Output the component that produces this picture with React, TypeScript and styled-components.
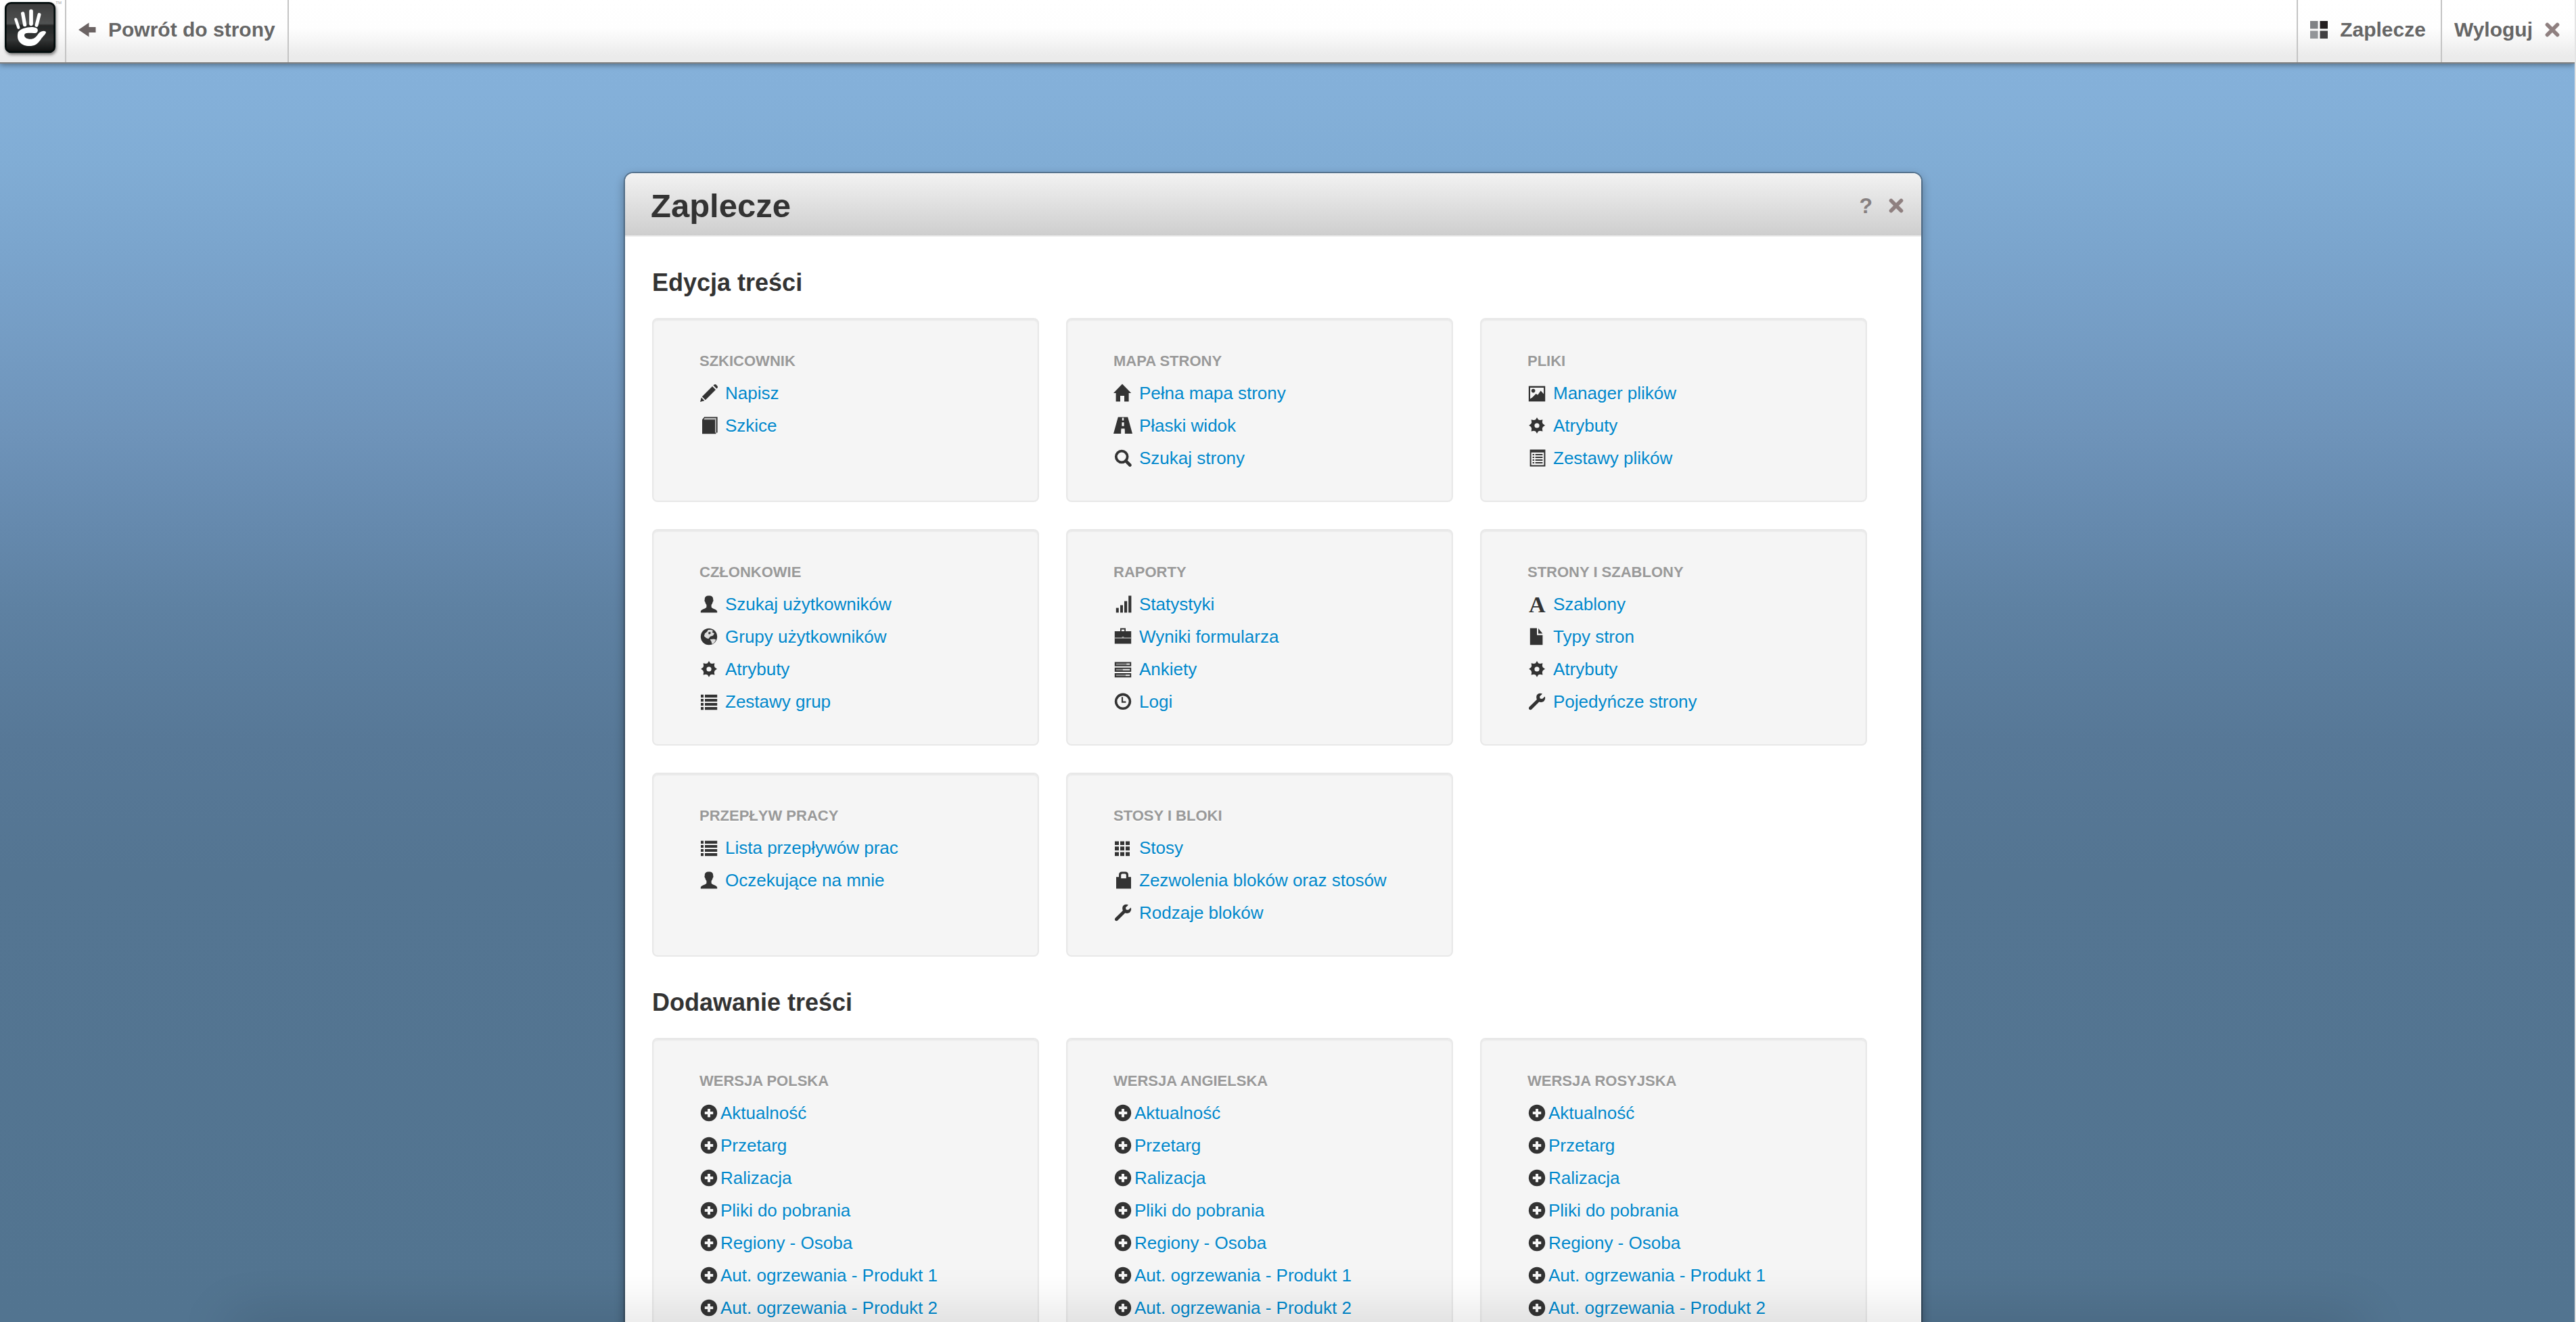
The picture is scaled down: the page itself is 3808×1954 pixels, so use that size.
import React from "react";
import styled, { createGlobalStyle } from "styled-components";

const GlobalStyle = createGlobalStyle`
  *, *::before, *::after { box-sizing: border-box; }
  body {
    margin: 0;
    font-family: "Helvetica Neue", "Liberation Sans", Arial, sans-serif;
    color: #333;
  }
  h1, h2, h3, ul { margin: 0; padding: 0; }
  ul { list-style: none; }
  a { text-decoration: none; }
  button { border: 0; padding: 0; background: none; font: inherit; cursor: pointer; }
`;

const Page = styled.div`
  height: 100vh;
  overflow-x: hidden;
  overflow-y: auto;
  scrollbar-width: none;
  border-right: 2px solid #e4e4e4;
  background: linear-gradient(
    to bottom,
    #86b2db 0,
    #84b0d9 7%,
    #81add5 12%,
    #78a1c9 22%,
    #6e93b9 33%,
    #6589ad 40%,
    #5e81a2 46%,
    #577897 56%,
    #547592 66%,
    #527490 100%
  );
`;

const Toolbar = styled.header`
  position: relative;
  display: flex;
  height: 94px;
  border-bottom: 2px solid #808080;
  background: linear-gradient(to bottom, #fff 0%, #fefefe 45%, #ebebeb 90%, #ebebeb 100%);
  box-shadow: 0 2px 8px rgba(0, 0, 0, 0.4);
`;

const LogoLink = styled.a`
  display: block;
  width: 98px;
  height: 92px;
  border-right: 2px solid #c4c4c4;
`;

const ToolbarItem = styled.a<{ $side: "left" | "right" }>`
  display: flex;
  align-items: center;
  gap: 18px;
  padding: 0 ${(p) => (p.$side === "left" ? "18px" : "22px")} 4px 18px;
  font-size: 30px;
  font-weight: bold;
  line-height: 36px;
  color: #666;
  border: 0 solid #c4c4c4;
  border-right-width: ${(p) => (p.$side === "left" ? "2px" : "0")};
  border-left-width: ${(p) => (p.$side === "right" ? "2px" : "0")};
`;

const ToolbarSpacer = styled.div`
  flex: 1;
`;

const Main = styled.main`
  display: flex;
  justify-content: center;
  padding: 160px 42px 80px 0;
`;

const Pane = styled.section`
  flex: 1;
  max-width: 1920px;
  border: 2px solid rgba(0, 0, 0, 0.3);
  border-radius: 14px;
  background: #fff;
  background-clip: padding-box;
  box-shadow: 0 6px 14px rgba(0, 0, 0, 0.3);
`;

const PaneHeader = styled.div`
  display: flex;
  align-items: center;
  height: 94px;
  padding: 4px 26px 0 38px;
  border-bottom: 2px solid #eee;
  border-radius: 12px 12px 0 0;
  background: linear-gradient(to bottom, #f2f2f2, #cecece);
`;

const PaneTitle = styled.h1`
  flex: 1;
  font-size: 49px;
  line-height: 56px;
`;

const PaneActions = styled.div`
  display: flex;
  align-items: center;
  gap: 24px;
`;

const PaneButton = styled.button`
  display: flex;
  align-items: center;
  font-size: 32px;
  font-weight: bold;
  line-height: 36px;
  color: #868080;
`;

const PaneBody = styled.div`
  padding: 0 80px 40px 40px;
`;

const Section = styled.section`
  padding-top: 44px;
`;

const SectionTitle = styled.h2`
  margin-bottom: 28px;
  font-size: 36px;
  line-height: 48px;
`;

const CardGrid = styled.div`
  display: grid;
  grid-template-columns: repeat(3, minmax(0, 1fr));
  gap: 40px;
`;

const Card = styled.section`
  padding: 38px 68px;
  border: 2px solid #e8e8e8;
  border-radius: 8px;
  background: #f5f5f5;
  box-shadow: inset 0 2px 2px rgba(0, 0, 0, 0.05);
  text-shadow: 0 2px 0 rgba(255, 255, 255, 0.6);
`;

const CardTitle = styled.h3`
  font-size: 22px;
  line-height: 48px;
  color: #999;
  text-transform: uppercase;
`;

const Item = styled.li<{ $gap: number }>`
  display: flex;
  align-items: center;
  gap: ${(p) => p.$gap}px;
  height: 48px;
  padding-bottom: 2px;
`;

const ItemIcon = styled.svg`
  flex: none;
  width: 28px;
  height: 28px;
  fill: #333;
`;

const ItemLink = styled.a`
  font-size: 26px;
  line-height: 46px;
  color: #08c;
`;

/* Soft shadow rising from the lower edge of the window. */
const BottomShade = styled.div`
  position: fixed;
  bottom: -40px;
  left: 340px;
  right: 320px;
  height: 40px;
  box-shadow: 0 0 80px rgba(0, 0, 0, 0.2);
  pointer-events: none;
`;

type IconName =
  | "pencil" | "book" | "home" | "road" | "search" | "picture" | "cog" | "listAlt"
  | "user" | "globe" | "list" | "signal" | "briefcase" | "tasks" | "time" | "font"
  | "file" | "wrench" | "th" | "lock" | "plus";

const DIM = "#8a8a8a";
const BG = "#f5f5f5";

const ICONS: Record<IconName, React.ReactNode> = {
  pencil: (
    <path d="M.5 13.5 1.4 10.3 3.7 12.6ZM1.9 9.6 9.5 2 12 4.5 4.4 12.1ZM10.2 1.3 10.9.7Q11.6.2 12.3.8L13.2 1.7Q13.8 2.4 13.3 3.1L12.7 3.8Z" />
  ),
  book: (
    <>
      <path d="M2 2.6 3.6.6H13.3V12.2H12.2V13.1H2Z" />
      <path d="M3.3 2 4 1.4H12.4V12.2H11.5V2.6H3.4Z" fill="#bbb" />
    </>
  ),
  home: <path d="M6.5.3 13.1 7H11.3V13.3H8V9H5V13.3H1.8V7H0Z" />,
  road: (
    <>
      <path d="M3.4.8H10.6L14 13H8.3V10.2H5.7V13H0Z" />
      <path d="M6.4 1.2H7.6V3.2H6.4ZM6.2 4.6H7.8V7.4H6.2ZM5.7 9.2H8.3V13H5.7Z" fill={BG} />
    </>
  ),
  search: (
    <>
      <circle cx="6.1" cy="6" r="4.2" fill="none" stroke="#333" strokeWidth="1.9" />
      <path d="M9.2 9.2 12.2 12.2" stroke="#333" strokeWidth="2.4" strokeLinecap="round" />
    </>
  ),
  picture: (
    <>
      <path d="M.9 1.8H13.1V13.2H.9Z" />
      <path d="M2 3H12V7.6L9.8 5.2 7.6 8.4 6.3 7.5 3.4 10.4 2 11.2Z" fill={BG} />
      <circle cx="4.3" cy="5.3" r="1.4" />
    </>
  ),
  cog: (
    <path
      fillRule="evenodd"
      d="M7 1 8 2.6 9.2 3 11.2 2.6 10.9 4.6 11.4 5.8 13 6.9 11.4 8 10.9 9.2 11.2 11.2 9.2 10.9 8 11.3 7 12.9 6 11.3 4.8 10.9 2.8 11.2 3.1 9.2 2.6 8 1.1 6.9 2.6 5.8 3.1 4.7 2.8 2.6 4.8 3 6 2.6ZM7 5.2A1.8 1.8 0 1 0 7 8.8 1.8 1.8 0 1 0 7 5.2Z"
    />
  ),
  listAlt: (
    <>
      <path fillRule="evenodd" d="M1.8.7H13.2V13.2H1.8ZM2.8 2.9V12.2H12.2V2.9Z" />
      <path d="M3.8 4H5V5H3.8ZM5.8 4H11.2V5H5.8ZM3.8 6H5V7H3.8ZM5.8 6H11.2V7H5.8ZM3.8 8H5V9H3.8ZM5.8 8H11.2V9H5.8ZM3.8 10H5V11H3.8ZM5.8 10H11.2V11H5.8Z" />
    </>
  ),
  user: (
    <path d="M7 .7C9.2.7 10.2 1.7 10.1 3.6 10.4 4 10.3 5 9.8 5.4 9.6 6.6 9.1 7.1 8.8 7.5V9.2C9.4 10.4 13 10.6 13.1 12.4V13.2H.9V12.4C1 10.6 4.6 10.4 5.2 9.2V7.5C4.9 7.1 4.4 6.6 4.2 5.4 3.7 5 3.6 4 3.9 3.6 3.8 1.7 4.8.7 7 .7Z" />
  ),
  globe: (
    <>
      <circle cx="7" cy="7" r="6.1" />
      <path d="M6.4 2 8.6 1.9 10.2 2.8 9.2 3.6 11 4.6 10 6.2 8 6.9 6.6 8.6 5 8 3.4 6.6 4 4.6 5.6 3.4ZM7.8 9 10.8 8.8 12.2 9.2C11.4 11.2 10.4 12 9.2 12.4L8.8 10.8Z" fill="#ddd" />
      <path d="M6.4 4 8 3.4 8.4 4.6 7 5.4Z" />
    </>
  ),
  list: (
    <path d="M1 1.9H3V4H1ZM4 1.9H13.1V4H4ZM1 5H3V7H1ZM4 5H13.1V7H4ZM1 8H3V10H1ZM4 8H13.1V10H4ZM1 11H3V13.1H1ZM4 11H13.1V13.1H4Z" />
  ),
  signal: (
    <path d="M1.9 9.8H3.9V13.2H1.9ZM5 7.8H7V13.2H5ZM8 4.8H10.1V13.2H8ZM11.1.8H13.2V13.2H11.1Z" />
  ),
  briefcase: (
    <>
      <path fillRule="evenodd" d="M5 3V.8H9V3H13.1V12.2H.9V3ZM5.9 3H8.1V1.7H5.9Z" />
      <path d="M.9 7.6H6.3V7H7.7V7.6H13.1V8.4H.9Z" fill="#aaa" />
    </>
  ),
  tasks: (
    <>
      <path d="M.9 1.8H13.1V4.9H.9ZM.9 5.9H13.1V9H.9ZM.9 10H13.1V13.1H.9Z" />
      <path d="M1.9 2.8H9.6V3.9H1.9ZM1.9 6.9H6.8V8H1.9ZM1.9 11H9V12.1H1.9Z" fill={DIM} />
      <path d="M9.6 2.8H12.1V3.9H9.6ZM6.8 6.9H12.1V8H6.8ZM9 11H12.1V12.1H9Z" fill="#ddd" />
    </>
  ),
  time: (
    <>
      <circle cx="7" cy="6.9" r="5.2" fill="none" stroke="#333" strokeWidth="1.8" />
      <path d="M6.5 3.6V7.3H9.2" fill="none" stroke="#333" strokeWidth="1.1" />
    </>
  ),
  font: (
    <text x="7.2" y="13.1" textAnchor="middle" fontFamily="Liberation Serif, serif" fontWeight="bold" fontSize="17">A</text>
  ),
  file: <path d="M1.9.8H7V5.9H11.2V13.1H1.9ZM8 .9 11.2 4.8H8Z" />,
  wrench: (
    <path d="M12.9 3.3 10.9 5 9.3 4.7 9 3.2 11 1.2C9.3.5 7.6.9 6.9 2.3 6.4 3.4 6.6 4.5 6.9 5.5L1.4 10.9C.8 11.6.9 12.3 1.3 12.7 1.8 13.2 2.6 13.2 3.2 12.6L8.6 7.2C9.7 7.6 11.2 7.6 12.2 6.6 13.1 5.7 13.3 4.4 12.9 3.3Z" />
  ),
  th: (
    <path d="M1 2.2H4V5H1ZM5 2.2H8V5H5ZM9 2.2H12V5H9ZM1 6.1H4V9H1ZM5 6.1H8V9H5ZM9 6.1H12V9H9ZM1 10.2H4V13.1H1ZM5 10.2H8V13.1H5ZM9 10.2H12V13.1H9Z" />
  ),
  lock: (
    <path
      fillRule="evenodd"
      d="M4 4.600V3C4 1.6 4.8.8 6.2.8H8.8C10.2.8 11 1.6 11 3V4.600H13V13.200H2V4.600ZM5.6 5.600H9.4V3.2Q9.4 2.3 8.5 2.3H6.5Q5.6 2.3 5.6 3.2Z"
    />
  ),
  plus: (
    <>
      <circle cx="7" cy="7" r="6.1" />
      <path d="M6 4H8V6H10.1V8H8V10.1H6V8H3.9V6H6Z" fill={BG} />
    </>
  ),
};

const LogoMark = () => (
  <svg width="96" height="92" viewBox="0 0 288 276" role="img" aria-label="concrete5">
    <defs>
      <linearGradient id="tile" x1="0" y1="0" x2="0" y2="1">
        <stop offset="0" stopColor="#3c3c3c" />
        <stop offset=".42" stopColor="#505252" />
        <stop offset=".46" stopColor="#262828" />
        <stop offset=".75" stopColor="#333535" />
        <stop offset="1" stopColor="#0c0e0e" />
      </linearGradient>
      <filter id="tileShadow" x="-20%" y="-20%" width="140%" height="140%">
        <feDropShadow dx="4" dy="8" stdDeviation="6" floodOpacity=".5" />
      </filter>
    </defs>
    <rect x="25" y="13" width="217" height="218" rx="24" fill="url(#tile)" stroke="#050707" strokeWidth="8" filter="url(#tileShadow)" />
    <g stroke="#fff" strokeLinecap="round" fill="none">
      <path d="M70 86 82 122" strokeWidth="13" />
      <path d="M101 60 110 110" strokeWidth="16" />
      <path d="M138 50V106" strokeWidth="17" />
      <path d="M174 65 162 112" strokeWidth="15" />
    </g>
    <path
      fill="#fff"
      d="M80 143C92 122 146 114 163 125 171 131 168 142 160 146 150 149 120 143 111 150 103 158 112 172 130 173 150 174 160 165 168 152 175 142 190 133 203 140 208 148 190 160 180 176 166 196 152 204 130 204 95 204 70 180 80 143Z"
    />
    <text x="247" y="18" fontSize="18" fontFamily="Liberation Sans, sans-serif" fill="#999">TM</text>
  </svg>
);

const ArrowLeft = () => (
  <svg width="26" height="22" viewBox="0 0 26 22" aria-hidden="true">
    <path d="M0 11 15.500 .5V7H25.500V15H15.500V21.500Z" fill="#6b6363" />
  </svg>
);

const Tiles = () => (
  <svg width="26" height="26" viewBox="0 0 26 26" aria-hidden="true">
    <path d="M0 0H11.500V11.500H0Z" fill="#808285" />
    <path d="M14.500 0H26V11.500H14.500Z" fill="#231f20" />
    <path d="M0 14.500H11.500V26H0Z" fill="#939598" />
    <path d="M14.500 14.500H26V26H14.500Z" fill="#414042" />
  </svg>
);

const Cross = () => (
  <svg width="22" height="22" viewBox="0 0 22 22" aria-hidden="true">
    <path d="M3.500 3.500 18.500 18.500M18.500 3.500 3.500 18.500" stroke="#8f8080" strokeWidth="5.600" strokeLinecap="round" />
  </svg>
);

type CardData = { title: string; items: [IconName, string][]; tight?: boolean };

const EDIT_CARDS: CardData[] = [
  { title: "Szkicownik", items: [["pencil", "Napisz"], ["book", "Szkice"]] },
  { title: "Mapa strony", items: [["home", "Pełna mapa strony"], ["road", "Płaski widok"], ["search", "Szukaj strony"]] },
  { title: "Pliki", items: [["picture", "Manager plików"], ["cog", "Atrybuty"], ["listAlt", "Zestawy plików"]] },
  { title: "Członkowie", items: [["user", "Szukaj użytkowników"], ["globe", "Grupy użytkowników"], ["cog", "Atrybuty"], ["list", "Zestawy grup"]] },
  { title: "Raporty", items: [["signal", "Statystyki"], ["briefcase", "Wyniki formularza"], ["tasks", "Ankiety"], ["time", "Logi"]] },
  { title: "Strony i szablony", items: [["font", "Szablony"], ["file", "Typy stron"], ["cog", "Atrybuty"], ["wrench", "Pojedyńcze strony"]] },
  { title: "Przepływ pracy", items: [["list", "Lista przepływów prac"], ["user", "Oczekujące na mnie"]] },
  { title: "Stosy i bloki", items: [["th", "Stosy"], ["lock", "Zezwolenia bloków oraz stosów"], ["wrench", "Rodzaje bloków"]] },
];

const NEW_CONTENT = [
  "Aktualność",
  "Przetarg",
  "Ralizacja",
  "Pliki do pobrania",
  "Regiony - Osoba",
  "Aut. ogrzewania - Produkt 1",
  "Aut. ogrzewania - Produkt 2",
];

const ADD_CARDS: CardData[] = ["Wersja polska", "Wersja angielska", "Wersja rosyjska"].map((title) => ({
  title,
  tight: true,
  items: NEW_CONTENT.map((label): [IconName, string] => ["plus", label]),
}));

const Cards = ({ title, cards }: { title: string; cards: CardData[] }) => (
  <Section>
    <SectionTitle>{title}</SectionTitle>
    <CardGrid>
      {cards.map((card) => (
        <Card key={card.title}>
          <CardTitle>{card.title}</CardTitle>
          <ul>
            {card.items.map(([icon, label]) => (
              <Item key={label} $gap={card.tight ? 3 : 10}>
                <ItemIcon viewBox="0 0 14 14" aria-hidden="true">{ICONS[icon]}</ItemIcon>
                <ItemLink href="#">{label}</ItemLink>
              </Item>
            ))}
          </ul>
        </Card>
      ))}
    </CardGrid>
  </Section>
);

export default function App() {
  return (
    <>
      <GlobalStyle />
      <Page>
        <Toolbar>
          <LogoLink href="#"><LogoMark /></LogoLink>
          <ToolbarItem href="#" $side="left"><ArrowLeft />Powrót do strony</ToolbarItem>
          <ToolbarSpacer />
          <ToolbarItem href="#" $side="right"><Tiles />Zaplecze</ToolbarItem>
          <ToolbarItem href="#" $side="right">Wyloguj<Cross /></ToolbarItem>
        </Toolbar>
        <Main>
          <Pane>
            <PaneHeader>
              <PaneTitle>Zaplecze</PaneTitle>
              <PaneActions>
                <PaneButton type="button">?</PaneButton>
                <PaneButton type="button" aria-label="Zamknij"><Cross /></PaneButton>
              </PaneActions>
            </PaneHeader>
            <PaneBody>
              <Cards title="Edycja treści" cards={EDIT_CARDS} />
              <Cards title="Dodawanie treści" cards={ADD_CARDS} />
            </PaneBody>
          </Pane>
        </Main>
      </Page>
      <BottomShade />
    </>
  );
}
